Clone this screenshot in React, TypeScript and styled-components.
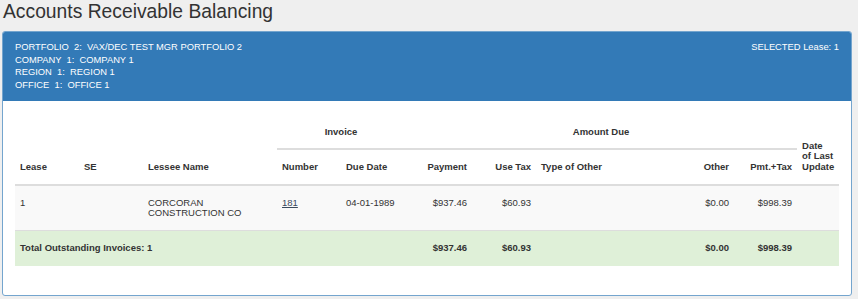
import React from "react";
import styled, { createGlobalStyle } from "styled-components";

const GlobalStyle = createGlobalStyle`
  html, body {
    margin: 0;
    padding: 0;
    background: #efefef;
    font-family: "Liberation Sans", Arial, sans-serif;
    color: #333;
  }
`;

const Page = styled.div`
  padding: 0 6px 0 2px;
`;

const Title = styled.h1`
  margin: 0;
  padding-left: 1px;
  font-size: 19.3px;
  line-height: 24px;
  font-weight: 400;
  color: #333;
`;

const Panel = styled.section`
  margin-top: 7px;
  width: 850px;
  box-sizing: border-box;
  border: 1px solid #74a5ce;
  border-radius: 3px;
  background: #fff;
  overflow: hidden;
`;

const PanelHeading = styled.header`
  display: flex;
  justify-content: space-between;
  align-items: flex-start;
  background: #337ab7;
  color: #fff;
  padding: 9px 12px 9px 12px;
  font-size: 9.35px;
  line-height: 12.7px;
`;

const InfoList = styled.div`
  display: flex;
  flex-direction: column;
  white-space: pre;
`;

const PanelBody = styled.div`
  padding: 15px 12px 29px;
`;

const Table = styled.table`
  width: 100%;
  table-layout: fixed;
  border-collapse: separate;
  border-spacing: 0;
  font-size: 9.5px;
  line-height: 10.5px;
  color: #333;
`;

type Align = { $align?: "left" | "right" | "center" };

const GroupTh = styled.th<Align>`
  padding: 10.75px 5px;
  font-weight: 700;
  text-align: ${(p) => p.$align || "center"};
  vertical-align: middle;
  border-bottom: ${(p) => (p.$align ? "0" : "2px solid #ddd")};
`;

const Th = styled.th<Align>`
  padding: 11.75px 5px;
  font-weight: 700;
  text-align: ${(p) => p.$align || "left"};
  vertical-align: bottom;
  border-bottom: 2px solid #ddd;
  white-space: nowrap;
`;

const DataRow = styled.tr`
  background: #f9f9f9;
`;

const Td = styled.td<Align>`
  padding: 12px 5px 11px;
  text-align: ${(p) => p.$align || "left"};
  vertical-align: top;
`;

const TotalRow = styled.tr`
  background: #dff0d8;
`;

const TotalTd = styled.td<Align>`
  padding: 12px 5px 12.5px;
  font-weight: 700;
  text-align: ${(p) => p.$align || "left"};
  vertical-align: top;
  border-top: 1px solid #ddd;
  white-space: nowrap;
`;

const InvoiceLink = styled.a`
  color: #3b4b5e;
  text-decoration: underline;
`;

const widths = [64, 64, 134, 64, 64, 67, 64, 134, 64, 63, 42];

export default function App() {
  return (
    <>
      <GlobalStyle />
      <Page>
        <Title>Accounts Receivable Balancing</Title>
        <Panel>
          <PanelHeading>
            <InfoList>
              <span>{"PORTFOLIO  2:  VAX/DEC TEST MGR PORTFOLIO 2"}</span>
              <span>{"COMPANY  1:  COMPANY 1"}</span>
              <span>{"REGION  1:  REGION 1"}</span>
              <span>{"OFFICE  1:  OFFICE 1"}</span>
            </InfoList>
            <span>SELECTED Lease: 1</span>
          </PanelHeading>
          <PanelBody>
            <Table>
              <colgroup>
                {widths.map((w, i) => (
                  <col key={i} style={{ width: w }} />
                ))}
              </colgroup>
              <thead>
                <tr>
                  <Th rowSpan={2}>Lease</Th>
                  <Th rowSpan={2}>SE</Th>
                  <Th rowSpan={2}>Lessee Name</Th>
                  <GroupTh colSpan={2}>Invoice</GroupTh>
                  <GroupTh colSpan={5}>Amount Due</GroupTh>
                  <Th rowSpan={2}>
                    Date
                    <br />
                    of Last
                    <br />
                    Update
                  </Th>
                </tr>
                <tr>
                  <Th>Number</Th>
                  <Th>Due Date</Th>
                  <Th $align="right">Payment</Th>
                  <Th $align="right">Use Tax</Th>
                  <Th>Type of Other</Th>
                  <Th $align="right">Other</Th>
                  <Th $align="right">Pmt.+Tax</Th>
                </tr>
              </thead>
              <tbody>
                <DataRow>
                  <Td>1</Td>
                  <Td></Td>
                  <Td>
                    CORCORAN
                    <br />
                    CONSTRUCTION CO
                  </Td>
                  <Td>
                    <InvoiceLink href="#">181</InvoiceLink>
                  </Td>
                  <Td>04-01-1989</Td>
                  <Td $align="right">$937.46</Td>
                  <Td $align="right">$60.93</Td>
                  <Td></Td>
                  <Td $align="right">$0.00</Td>
                  <Td $align="right">$998.39</Td>
                  <Td></Td>
                </DataRow>
                <TotalRow>
                  <TotalTd colSpan={5}>Total Outstanding Invoices: 1</TotalTd>
                  <TotalTd $align="right">$937.46</TotalTd>
                  <TotalTd $align="right">$60.93</TotalTd>
                  <TotalTd></TotalTd>
                  <TotalTd $align="right">$0.00</TotalTd>
                  <TotalTd $align="right">$998.39</TotalTd>
                  <TotalTd></TotalTd>
                </TotalRow>
              </tbody>
            </Table>
          </PanelBody>
        </Panel>
      </Page>
    </>
  );
}
